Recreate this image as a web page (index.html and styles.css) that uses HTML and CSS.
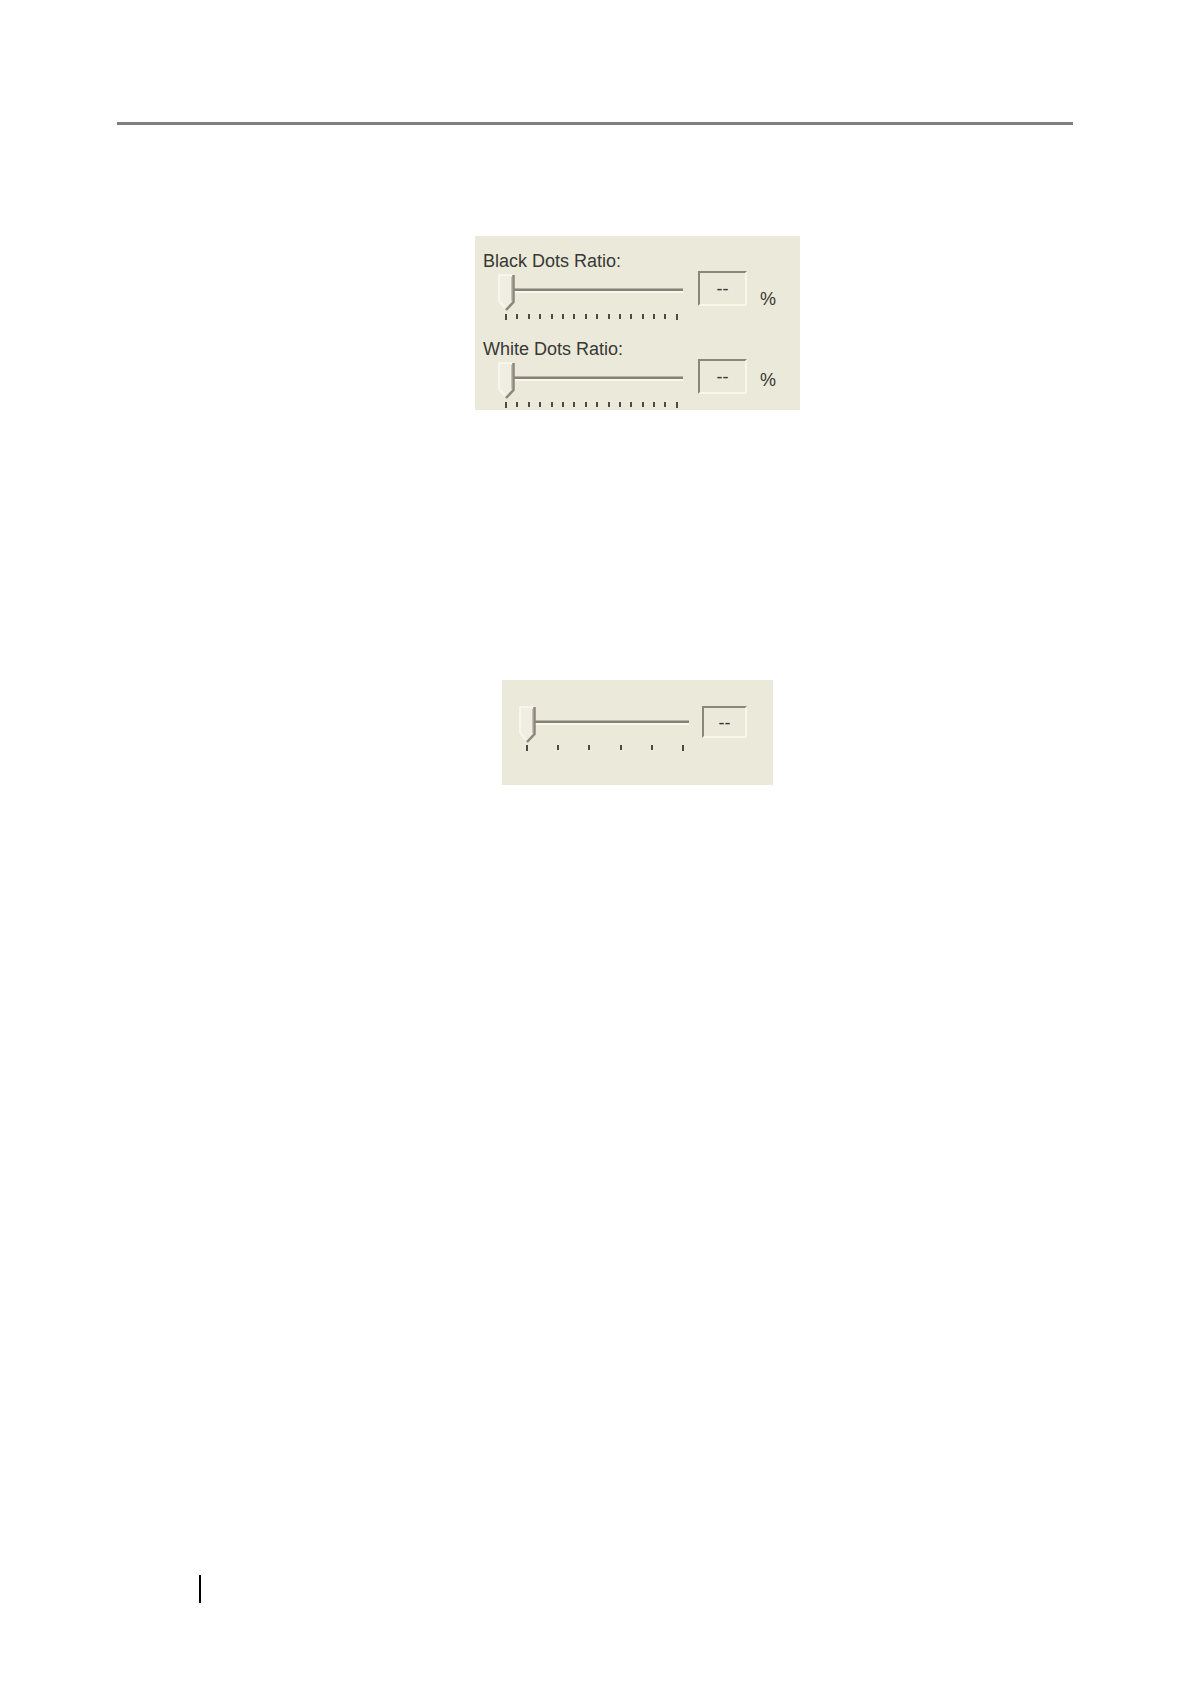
FILE: index.html
```html
<!DOCTYPE html>
<html lang="en">
<head>
<meta charset="utf-8">
<title>Dots Ratio</title>
<link rel="stylesheet" href="styles.css">
</head>
<body>
<main class="page">
  <hr class="rule">
  <div class="content">
    <form class="panel">
      <div class="setting">
        <div class="control">
          <label class="label" for="black">Black Dots Ratio:</label>
          <input class="slider" id="black" type="range" min="0" max="15" value="0">
          <div class="ticks" aria-hidden="true"><i></i><i></i><i></i><i></i><i></i><i></i><i></i><i></i><i></i><i></i><i></i><i></i><i></i><i></i><i></i><i></i></div>
        </div>
        <output class="value" for="black">--</output>
        <span class="unit unit-low">%</span>
      </div>
      <div class="setting">
        <div class="control">
          <label class="label" for="white">White Dots Ratio:</label>
          <input class="slider" id="white" type="range" min="0" max="15" value="0">
          <div class="ticks" aria-hidden="true"><i></i><i></i><i></i><i></i><i></i><i></i><i></i><i></i><i></i><i></i><i></i><i></i><i></i><i></i><i></i><i></i></div>
        </div>
        <output class="value" for="white">--</output>
        <span class="unit">%</span>
      </div>
    </form>
    <form class="panel panel-small">
      <div class="setting">
        <div class="control">
          <input class="slider" id="level" type="range" min="0" max="5" value="0" aria-label="Level">
          <div class="ticks" aria-hidden="true"><i></i><i></i><i></i><i></i><i></i><i></i></div>
        </div>
        <output class="value" for="level">--</output>
      </div>
    </form>
  </div>
  <footer class="footer"></footer>
</main>
</body>
</html>
```

FILE: styles.css
```css
* {
  box-sizing: border-box;
}

body {
  margin: 0;
  background: #fff;
  color: #383834;
  font-family: "Liberation Sans", Arial, sans-serif;
  font-size: 18px;
  line-height: 24px;
}

.page {
  display: flex;
  flex-direction: column;
  min-height: 100vh;
  padding: 122px 117px 81px;
}

.rule {
  width: 100%;
  height: 3px;
  margin: 0;
  border: 0;
  background: #7f7d7e;
}

.content {
  display: flex;
  flex-direction: column;
  flex: 1;
  align-items: center;
  gap: 270px;
  padding: 111px 0 0 85px;
}

.panel {
  display: flex;
  flex-direction: column;
  gap: 18px;
  width: 100%;
  max-width: 325px;
  padding: 13px 24px 3px 8px;
  background: #ebe9da;
}

.setting {
  display: flex;
  align-items: flex-start;
}

.control {
  display: flex;
  flex: 1;
  flex-direction: column;
}

.label {
  white-space: nowrap;
}

.slider {
  width: auto;
  height: 38px;
  margin: 0 1px 0 14px;
  appearance: none;
  background: transparent;
}

.slider::-webkit-slider-runnable-track {
  height: 38px;
  background:
    linear-gradient(#b5b3a5 0 1px, #858276 1px 3px, #f8f7ed 3px 5px)
    10px 15px / 100% 5px no-repeat;
}

.slider::-webkit-slider-thumb {
  width: 19px;
  height: 38px;
  appearance: none;
  background: url("data:image/svg+xml,%3Csvg xmlns='http://www.w3.org/2000/svg' width='19' height='38'%3E%3Cpath d='M1.500 2H17V28L9 36L1.500 28Z' fill='%23f0eee2'/%3E%3Cpath d='M8 35L2 28V2H16' fill='none' stroke='%23f8f6ec' stroke-width='2'/%3E%3Cpath d='M14.500 4V28' fill='none' stroke='%23c3c1b3' stroke-width='1'/%3E%3Cpath d='M16.500 2V29L9 37' fill='none' stroke='%238a877b' stroke-width='2.500'/%3E%3C/svg%3E") no-repeat;
}

.ticks {
  display: flex;
  justify-content: space-between;
  height: 8px;
  margin: 0 6px 0 22px;
}

.ticks i {
  width: 2px;
  height: 5px;
  margin-top: 3px;
  background: #4c4a42;
}

.ticks i:first-child,
.ticks i:last-child {
  height: 6px;
}

.value {
  width: 49px;
  height: 35px;
  margin: 22px 0 0 14px;
  border: 2px solid;
  border-color: #89867a #f9f7ec #f9f7ec #89867a;
  line-height: 32px;
  text-align: center;
}

.unit {
  margin: 31px 0 0 13px;
}

.unit-low {
  margin-top: 38px;
}

.panel-small {
  max-width: 271px;
  padding: 26px 26px 33px 2px;
}

.panel-small .slider {
  height: 36px;
}

.panel-small .value {
  width: 45px;
  height: 32px;
  margin: 0 0 0 12px;
  line-height: 30px;
}

.panel-small .ticks {
  height: 10px;
}

.footer {
  height: 28px;
  margin-left: 82px;
  border-left: 2px solid #000;
}
```
